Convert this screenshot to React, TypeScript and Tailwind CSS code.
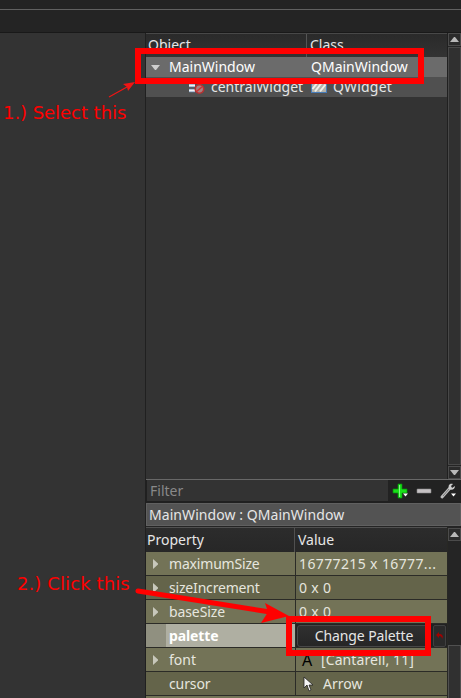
import React from 'react';

const UI = "font-['Noto_Sans',sans-serif]";

function Arrow({ dir }: { dir: 'up' | 'down' }) {
  return (
    <div className="flex h-[13px] w-[13px] shrink-0 items-center justify-center border border-[#4b4b4b] bg-[#2b2b2b]">
      <svg width="9" height="5" viewBox="0 0 9 5">
        <path d={dir === 'up' ? 'M0 5L4 0H5L9 5Z' : 'M0 0H9L5 5H4Z'} fill="#b8b8b8" />
      </svg>
    </div>
  );
}

function Right() {
  return (
    <svg width="5" height="10" viewBox="0 0 5 10">
      <path d="M0 0L5 4.5V5.5L0 10Z" fill="#c8c8bb" />
    </svg>
  );
}

type Row = { name: string; nameTrack: string; arrow: boolean; alt: boolean; value: React.ReactNode };

const rows: Row[] = [
  { name: 'maximumSize', nameTrack: 'tracking-[-0.18px]', arrow: true, alt: false, value: <span className="tracking-[0.38px]">16777215 x 16777...</span> },
  { name: 'sizeIncrement', nameTrack: 'tracking-[-0.18px]', arrow: true, alt: true, value: <span className="tracking-[0.3px]">0 x 0</span> },
  { name: 'baseSize', nameTrack: 'tracking-[-0.1px]', arrow: true, alt: false, value: <span className="tracking-[0.3px]">0 x 0</span> },
];

function PropertyRow({ name, nameTrack, arrow, alt, value }: Row) {
  return (
    <div className={`flex h-6 shrink-0 border-b border-[#2b2b27] text-[#e6e6df] ${alt ? 'bg-[#64644a]' : 'bg-[#737357]'}`}>
      <div className="flex w-[149px] shrink-0 items-center">
        <div className="flex w-[23px] pl-[7px]">{arrow && <Right />}</div>
        <span className={nameTrack}>{name}</span>
      </div>
      <div className="flex flex-1 items-center whitespace-pre border-l border-[#2b2b27] pl-[3px]">{value}</div>
    </div>
  );
}

export default function App() {
  return (
    <div className={`relative h-[698px] w-[461px] overflow-hidden bg-[#333] text-[14px] leading-[20px] text-[#e6e6e6] ${UI}`}>
      <div className="flex h-full flex-col">
        <div className="h-[9px] shrink-0 bg-[#232323]" />
        <div className="h-px shrink-0 bg-[#606060]" />
        <div className="h-[23px] shrink-0 border-b border-[#191919] bg-[#242424]" />
        <div className="flex min-h-0 flex-1">
          <div className="w-[146px] shrink-0 border-r border-[#202020] bg-[#333]" />
          <div className="flex w-[315px] flex-col">
            <div className="flex h-[446px] shrink-0">
              <div className="flex w-[301px] flex-col">
                <div className="flex h-6 shrink-0 border-t border-[#484848] bg-gradient-to-b from-[#2a2a2a] to-[#333]">
                  <div className="w-[161px] border-r border-[#555] pl-[2px] pt-px">Object</div>
                  <div className="pl-[3px] pt-px">Class</div>
                </div>
                <div className="flex h-5 shrink-0 items-center bg-[#6b6b6b] text-white">
                  <svg className="ml-[5px] mr-[9px] shrink-0" width="9" height="5" viewBox="0 0 9 5"><path d="M0 0H9L5 5H4Z" fill="#cfcfcf" /></svg>
                  <span className="w-[142px]">MainWindow</span>
                  <span>QMainWindow</span>
                </div>
                <div className="flex h-5 shrink-0 items-center bg-[#505050]">
                  <svg className="ml-[43px] mr-[6px] shrink-0" width="16" height="14" viewBox="0 0 16 14">
                    <path d="M0 5.5H6M0 10.5H6" stroke="#688fbd" strokeWidth="3.4" />
                    <path d="M0 5.5H6M0 10.5H6" stroke="#f2f2f2" strokeWidth="1.8" />
                    <circle cx="10.5" cy="9" r="4.2" fill="#a98080" stroke="#b92f2f" strokeWidth="1.6" />
                    <path d="M7.5 11.5L13.5 6.5" stroke="#c33" strokeWidth="1.6" />
                  </svg>
                  <span className="w-[100px]">centralWidget</span>
                  <svg className="mr-[6px] shrink-0" width="16" height="12" viewBox="0 0 16 12">
                    <rect x=".5" y=".5" width="15" height="11" fill="#b4b4ac" stroke="#477bb7" />
                    <path d="M1.5 8L6.5 1.5M4 10.5L11 1.5M9 10.5L14.5 3.5" stroke="#f0f0eb" strokeWidth="2" />
                  </svg>
                  <span className="tracking-[0.2px]">QWidget</span>
                </div>
                <div className="flex-1 bg-[#333]" />
              </div>
              <div className="flex w-[14px] flex-col border-l border-[#202020] bg-[#252525]">
                <Arrow dir="up" />
                <div className="my-px flex-1 border border-[#484848] bg-[#303030]" />
                <Arrow dir="down" />
              </div>
            </div>
            <div className="flex h-6 shrink-0 border-b-2 border-t border-b-[#202020] border-t-[#686868] bg-[#333]">
              <div className="flex w-[242px] items-center border-l border-[#202020] pl-[3px] text-[#898989]">Filter</div>
              <div className="flex flex-1 items-center bg-[#222]">
                <svg width="73" height="21" viewBox="0 0 73 21">
                  <path d="M10 4H14V9H19V13H14V18H10V13H5V9H10Z" fill="#18df19" stroke="#078c0a" strokeWidth=".7" />
                  <path d="M11.5 5V17" stroke="#8af58a" />
                  <path d="M15 13.5H20L17.5 16.5ZM63 13.5H68L65.5 16.5Z" fill="#fff" />
                  <rect x="29" y="9" width="14" height="4" rx=".5" fill="#c5c1c3" stroke="#888" strokeWidth=".6" />
                  <path d="M54 17L62 8" stroke="#bdbdbd" strokeWidth="3" strokeLinecap="round" />
                  <path d="M65 4C61 3 60 6 61 9C64 11 67 9 67 6L64 8L63 6Z" fill="#ccc" />
                  <path d="M55 16L61 9" stroke="#777" />
                </svg>
              </div>
            </div>
            <div className="flex h-[23px] shrink-0 items-center border border-[#606060] bg-[#535353] pl-[2px] tracking-[0.06px]">MainWindow : QMainWindow</div>
            <div className="h-px shrink-0 bg-[#242424]" />
            <div className="flex min-h-0 flex-1">
              <div className="flex w-[302px] shrink-0 flex-col border-r border-[#282824]">
                <div className="flex h-[25px] shrink-0 items-center border-t border-[#505050] bg-gradient-to-b from-[#2c2c2c] to-[#272727]">
                  <div className="flex h-full w-[149px] items-center border-r border-[#505050] pl-[1px]">Property</div>
                  <span className="pl-[3px]">Value</span>
                </div>
                {rows.map((r) => <PropertyRow key={r.name} {...r} />)}
                <div className="flex h-6 shrink-0 border-b border-[#2b2b27] bg-[#909080]">
                  <div className="w-5" />
                  <div className="flex w-[129px] items-center bg-[#afafa2] pl-[3px] font-bold tracking-[-0.1px] text-white">palette</div>
                  <div className="flex flex-1 items-center border-l border-[#2b2b27] bg-[#222]">
                    <div className="ml-px flex h-[22px] w-[134px] items-center justify-center rounded-[3px] border border-[#484848] bg-gradient-to-b from-[#303030] to-[#262626] tracking-[-0.12px]">Change Palette</div>
                    <div className="ml-[2px] flex h-[22px] w-[13px] items-center justify-center rounded-[2px] border border-[#404040] bg-[#2a2a2a]">
                      <svg width="8" height="7" viewBox="0 0 8 7"><path d="M3 0V2C6 2 8 4 6 7C6 5 5 4 3 4V6L0 3Z" fill="#a00000" /></svg>
                    </div>
                  </div>
                </div>
                <PropertyRow name="font" nameTrack="" arrow alt={false} value={<><span className="w-[22px] pl-[3px] text-[16px] text-black">A</span><span className="tracking-[0.1px]">[Cantarell, 11]</span></>} />
                <PropertyRow name="cursor" nameTrack="tracking-[-0.1px]" arrow={false} alt value={<><svg className="ml-1 mr-2" width="12" height="16" viewBox="0 0 12 16"><path d="M1 1V12L4 9L6 15L8 14L6 9H10Z" fill="#f5f5f5" stroke="#222" strokeWidth=".8" /></svg><span>Arrow</span></>} />
                <div className="flex-1 bg-[#737357]" />
              </div>
              <div className="flex w-[13px] flex-col bg-[#252525] pt-px">
                <Arrow dir="up" />
                <div className="h-[104px]" />
                <div className="flex-1 border border-b-0 border-[#505050] bg-[#303030]" />
              </div>
            </div>
          </div>
        </div>
      </div>

      <div className="absolute left-[135px] top-[48px] h-[36px] w-[289px] border-[6px] border-[#f00]" />
      <div className="absolute left-[286px] top-[616px] h-[40px] w-[145px] border-[6px] border-[#f00]" />
      <svg className="absolute inset-0" width="461" height="698" viewBox="0 0 461 698">
        <path d="M109 97L127 87" stroke="#f01515" strokeWidth="1.2" />
        <path d="M135 82L128 91L127 87L123 84Z" fill="#f01515" />
        <path d="M138 591L270 612" stroke="#f00" strokeWidth="5" strokeLinecap="round" />
        <path d="M289 616L261 623L268 612L265 603Z" fill="#f00" />
      </svg>
      <span className="absolute left-[3px] top-[103px] whitespace-nowrap font-['DejaVu_Sans',sans-serif] text-[18px] tracking-[-0.05px] text-[#f00]">1.) Select this</span>
      <span className="absolute left-[17px] top-[574px] whitespace-nowrap font-['DejaVu_Sans',sans-serif] text-[18px] tracking-[0.1px] text-[#f00]">2.) Click this</span>
    </div>
  );
}
